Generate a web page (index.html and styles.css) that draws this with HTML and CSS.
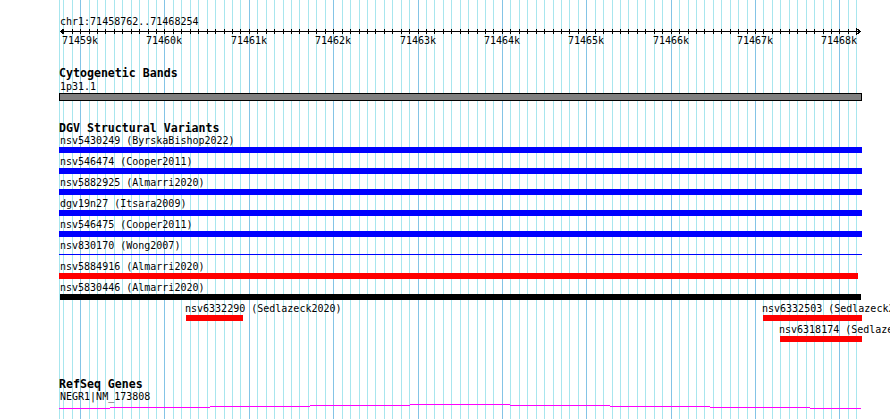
FILE: index.html
```html
<!doctype html>
<html lang = "en">
    <head>
        <meta charset = "utf-8" />
        <meta name = "viewport" content = "width=device-width, initial-scale=1.0">

        <!-- CSS -->
        <link rel="stylesheet" href="styles.css">

        <title>chr1:71458762..71468254</title>
    </head>
    <body>
        <main class = "panel" data-start = "71458762" data-end = "71468254">
            <svg class = "grid"></svg>

            <section class = "ruler">
                <span class = "label">chr1:71458762..71468254</span>
                <svg class = "axis"></svg>
                <div class = "ticks">
                    <span data-bp = "71459000">71459k</span>
                    <span data-bp = "71460000">71460k</span>
                    <span data-bp = "71461000">71461k</span>
                    <span data-bp = "71462000">71462k</span>
                    <span data-bp = "71463000">71463k</span>
                    <span data-bp = "71464000">71464k</span>
                    <span data-bp = "71465000">71465k</span>
                    <span data-bp = "71466000">71466k</span>
                    <span data-bp = "71467000">71467k</span>
                    <span data-bp = "71468000">71468k</span>
                </div>
            </section>

            <section class = "track cytoband">
                <h4>Cytogenetic Bands</h4>
                <span class = "label">1p31.1</span>
                <div class = "band"></div>
            </section>

            <section class = "track variants">
                <h4>DGV Structural Variants</h4>
                <div class = "row">
                    <div class = "feature full">
                        <span class = "label">nsv5430249 (ByrskaBishop2022)</span>
                        <div class = "bar blue"></div>
                    </div>
                </div>
                <div class = "row">
                    <div class = "feature full">
                        <span class = "label">nsv546474 (Cooper2011)</span>
                        <div class = "bar blue"></div>
                    </div>
                </div>
                <div class = "row">
                    <div class = "feature full">
                        <span class = "label">nsv5882925 (Almarri2020)</span>
                        <div class = "bar blue"></div>
                    </div>
                </div>
                <div class = "row">
                    <div class = "feature full">
                        <span class = "label">dgv19n27 (Itsara2009)</span>
                        <div class = "bar blue"></div>
                    </div>
                </div>
                <div class = "row">
                    <div class = "feature full">
                        <span class = "label">nsv546475 (Cooper2011)</span>
                        <div class = "bar blue"></div>
                    </div>
                </div>
                <div class = "row">
                    <div class = "feature full">
                        <span class = "label">nsv830170 (Wong2007)</span>
                        <div class = "bar line blue"></div>
                    </div>
                </div>
                <div class = "row">
                    <div class = "feature full">
                        <span class = "label">nsv5884916 (Almarri2020)</span>
                        <div class = "bar red" style = "width: 799px"></div>
                    </div>
                </div>
                <div class = "row">
                    <div class = "feature full">
                        <span class = "label">nsv5830446 (Almarri2020)</span>
                        <div class = "bar black" style = "margin-left: 1px; width: 801px"></div>
                    </div>
                </div>
                <div class = "row">
                    <div class = "feature" style = "margin-left: 127px; width: 57px">
                        <span class = "label">nsv6332290 (Sedlazeck2020)</span>
                        <div class = "bar red"></div>
                    </div>
                    <div class = "feature" style = "margin-left: 520px; width: 99px">
                        <span class = "label">nsv6332503 (Sedlazeck2020)</span>
                        <div class = "bar red"></div>
                    </div>
                </div>
                <div class = "row">
                    <div class = "feature" style = "margin-left: 721px; width: 82px">
                        <span class = "label">nsv6318174 (Sedlazeck2020)</span>
                        <div class = "bar red"></div>
                    </div>
                </div>
            </section>

            <section class = "track genes">
                <h4>RefSeq Genes</h4>
                <span class = "label">NEGR1|NM_173808</span>
                <svg class = "gene">
                    <path d = "M0 6.5H51M51 5.5H151M151 4.5H251M251 3.5H351M351 2.5H451M451 3.5H551M551 4.5H651M651 5.5H751M751 6.5H802" />
                </svg>
            </section>
        </main>

        <!-- JS -->
        <script type = "module">
            const ns = "http://www.w3.org/2000/svg";
            const panel = document.querySelector(".panel");
            const start = Number(panel.dataset.start);
            const end = Number(panel.dataset.end);

            // 60px is where the first base sits, panel starts at 59px
            const scale = 0.08437;
            const toX = (bp) => Math.round(60 + (bp - start) * scale) - 59;

            function rect(svg, x, y, width, height, cls) {
                const element = document.createElementNS(ns, "rect");
                element.setAttribute("x", x);
                element.setAttribute("y", y);
                element.setAttribute("width", width);
                element.setAttribute("height", height);
                if (cls) element.setAttribute("class", cls);
                svg.appendChild(element);
            }

            // Grid lines, every 100bp, darker every 1k
            const grid = document.querySelector(".grid");
            rect(grid, 0, 0, 1, "100%", "minor");
            for (let bp = Math.ceil(start / 100) * 100; bp <= end; bp += 100) {
                rect(grid, toX(bp), 0, 1, "100%", bp % 1000 ? "minor" : "major");
            }

            // Axis with ticks and arrows
            const axis = document.querySelector(".axis");
            rect(axis, 1, 3, 801, 1);
            for (let bp = Math.ceil(start / 100) * 100; bp <= end; bp += 100) {
                rect(axis, toX(bp), 1, 1, 5);
            }
            const arrows = document.createElementNS(ns, "path");
            arrows.setAttribute("d", "M5.5 0.5L1.5 3.5L5.5 6.5M797.5 0.5L801.5 3.5L797.5 6.5");
            axis.appendChild(arrows);

            // Tick labels centered on their line
            for (const tick of document.querySelectorAll(".ticks span")) {
                tick.style.left = `${toX(Number(tick.dataset.bp)) - 18}px`;
            }
        </script>
    </body>
</html>
```

FILE: styles.css
```css
* {
    margin: 0px;
    color: #000;
    font-family: "DejaVu Sans Mono", monospace;
}
body {
    height: 419px;
    overflow: hidden;
    background-color: #fff;
}
h4 {
    font-size: 11.6px;
    line-height: 14px;
    font-weight: bold;
    white-space: nowrap;
}
svg {
    display: block;
    shape-rendering: crispEdges;
}
.panel {
    position: relative;
    z-index: 0;
    width: 803px;
    height: 419px;
    margin-left: 59px;
    padding-top: 15px;
    box-sizing: border-box;
}
.grid {
    position: absolute;
    z-index: -1;
    top: 0px;
    left: 0px;
    width: 803px;
    height: 419px;
}
.minor {
    fill: #a8e6ee;
}
.major {
    fill: #84c4e6;
}
.label {
    display: block;
    padding-left: 1px;
    font-size: 10px;
    line-height: 11px;
    white-space: nowrap;
}

/* Ruler */
.ruler .label {
    line-height: 13px;
}
.axis {
    width: 803px;
    height: 7px;
    fill: #000;
    overflow: visible;
}
.axis path {
    fill: none;
    stroke: #000;
    stroke-width: 1px;
}
.ticks {
    position: relative;
    height: 12px;
}
.ticks span {
    position: absolute;
    top: 0px;
    font-size: 10px;
    line-height: 11px;
    white-space: nowrap;
}

/* Tracks */
.cytoband {
    margin-top: 19px;
}
.cytoband .label {
    line-height: 13px;
}
.band {
    height: 8px;
    box-sizing: border-box;
    border: 1px solid #000;
    background-color: #808080;
}
.variants {
    margin-top: 20px;
    padding-bottom: 3px;
}
.genes {
    margin-top: 32px;
}
.gene {
    width: 803px;
    height: 8px;
}
.gene path {
    fill: none;
    stroke: #f0f;
    stroke-width: 1px;
}

/* Features */
.row {
    display: flex;
}
.row + .row {
    margin-top: 3px;
}
.feature {
    display: flex;
    flex: none;
    flex-direction: column;
    gap: 1px;
}
.feature.full {
    width: 803px;
}
.feature:not(.full) .label {
    padding-left: 0px;
    margin-left: -1px;
}
.bar {
    height: 6px;
}
.bar.line {
    height: 1px;
    margin: 2px 0px 3px;
}
.blue {
    background-color: #00f;
}
.red {
    background-color: #f00;
}
.black {
    background-color: #000;
}
```
